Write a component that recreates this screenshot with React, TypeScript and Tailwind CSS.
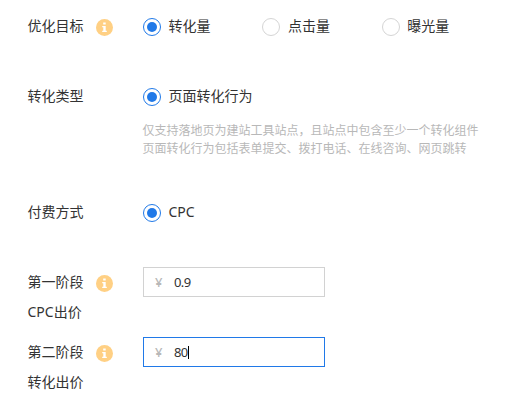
import { useState } from 'react';
import type { ReactNode } from 'react';

const goals = ['转化量', '点击量', '曝光量'];

function InfoIcon() {
  return (
    <svg className="ml-3 mt-[7px] h-[17px] w-[17px] shrink-0" viewBox="0 0 17 17">
      <circle cx="8.5" cy="8.5" r="8.5" fill="#ffd084" />
      <path
        d="M7.2 3.4h2.5v2.2H7.2zM6.2 6.9h3.5v4.8h1.1v1.4H6.2v-1.4h1.1V8.2H6.2z"
        fill="#fff"
      />
    </svg>
  );
}

interface RadioProps {
  label: string;
  checked: boolean;
  onSelect?: () => void;
}

function Radio({ label, checked, onSelect }: RadioProps) {
  return (
    <button type="button" onClick={onSelect} className="flex h-[30px] items-center">
      <span
        className={`flex h-[18px] w-[18px] items-center justify-center rounded-full border ${
          checked ? 'border-[#2079e8]' : 'border-[#d5d5d5]'
        }`}
      >
        {checked && <span className="h-2.5 w-2.5 rounded-full bg-[#2079e8]" />}
      </span>
      <span className="-mt-0.5 ml-[7.5px]">{label}</span>
    </button>
  );
}

interface RowProps {
  label: string[];
  info?: boolean;
  className?: string;
  children: ReactNode;
}

function Row({ label, info, className = '', children }: RowProps) {
  return (
    <div className={`flex items-start ${className}`}>
      <div className={`flex w-[115px] shrink-0 ${label.length > 1 ? 'pt-px' : ''}`}>
        <div className="-ml-[0.5px] -mt-px mr-[0.5px] w-14">
          {label.map((line) => (
            <div key={line} className="whitespace-nowrap">
              {line}
            </div>
          ))}
        </div>
        {info && <InfoIcon />}
      </div>
      {children}
    </div>
  );
}

function PriceInput({ value, focused }: { value: string; focused?: boolean }) {
  return (
    <div
      className={`flex h-[30px] w-[182px] items-center border pl-[11px] text-[13px] ${
        focused ? 'border-[#2079e8]' : 'border-[#d2d2d2]'
      }`}
    >
      <span className="w-[19px] font-medium text-[#b8b8b8]">¥</span>
      <span className="tracking-[-0.6px]">{value}</span>
      {focused && <span className="h-[13px] w-px bg-black" />}
    </div>
  );
}

export default function App() {
  const [goal, setGoal] = useState(goals[0]);

  return (
    <div className="h-[414px] w-[518px] bg-white pl-7 pt-3 font-['Noto_Sans','Noto_Sans_CJK_SC',sans-serif] text-sm leading-[30px] text-[#333]">
      <Row label={['优化目标']} info>
        <div className="flex">
          {goals.map((item) => (
            <div key={item} className="w-[119.4px] shrink-0">
              <Radio label={item} checked={goal === item} onSelect={() => setGoal(item)} />
            </div>
          ))}
        </div>
      </Row>

      <Row label={['转化类型']} className="mt-10">
        <div>
          <Radio label="页面转化行为" checked />
          <div className="-ml-[0.5px] mt-2.5 text-xs leading-[18px] text-[#b8b8b8]">
            <p className="whitespace-nowrap">仅支持落地页为建站工具站点，且站点中包含至少一个转化组件</p>
            <p className="whitespace-nowrap">页面转化行为包括表单提交、拨打电话、在线咨询、网页跳转</p>
          </div>
        </div>
      </Row>

      <Row label={['付费方式']} className="mt-10">
        <Radio label="CPC" checked />
      </Row>

      <Row label={['第一阶段', 'CPC出价']} info className="mt-[39px]">
        <PriceInput value="0.9" />
      </Row>

      <Row label={['第二阶段', '转化出价']} info className="mt-2.5">
        <PriceInput value="80" focused />
      </Row>
    </div>
  );
}
